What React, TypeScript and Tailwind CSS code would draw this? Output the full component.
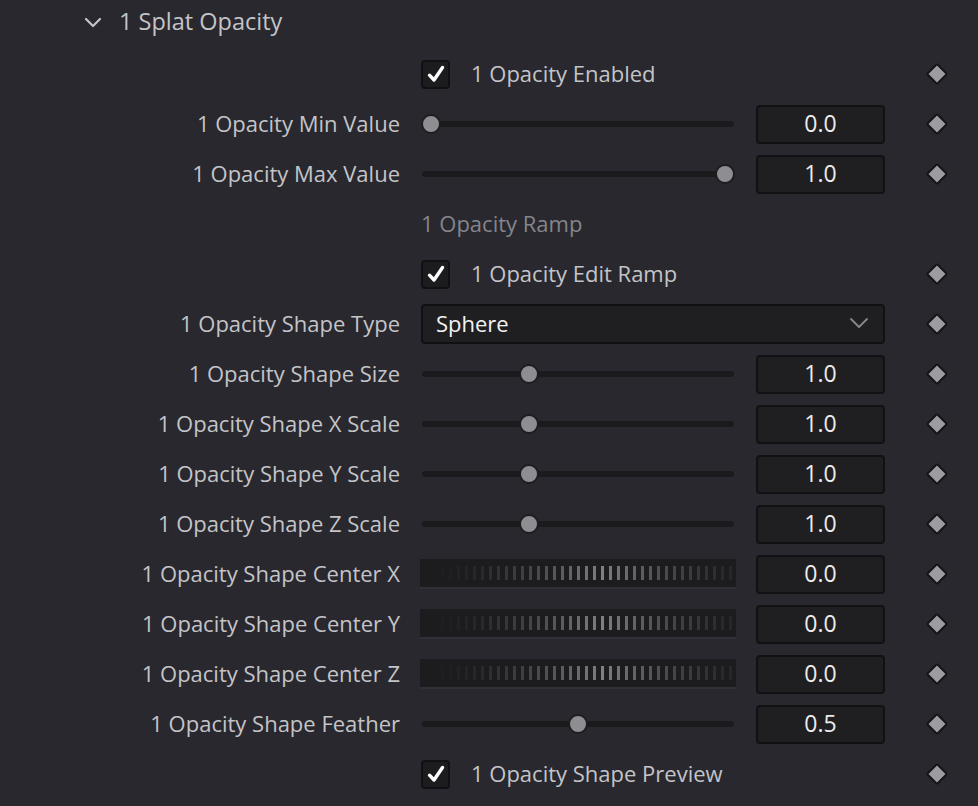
import type { ReactNode } from 'react';

const font = { fontFamily: '"Open Sans", "Noto Sans", sans-serif' };

function Diamond() {
  return (
    <div className="flex w-[93px] shrink-0 items-center pl-[44px]">
      <div className="h-[16px] w-[16px] rotate-45 rounded-[2px] border-2 border-[#151517] bg-[#9c9ca2]" />
    </div>
  );
}

function Label({ text }: { text: string }) {
  return <div className="w-[400px] shrink-0 whitespace-nowrap pb-[2px] text-right text-[#c4c4c8]">{text}</div>;
}

function Row({ label, children }: { label?: string; children: ReactNode }) {
  return (
    <div className="flex h-[50px] items-center">
      <Label text={label ?? ''} />
      <div className="ml-[21px] flex w-[464px] shrink-0 items-center">{children}</div>
      <Diamond />
    </div>
  );
}

function ValueBox({ value }: { value: string }) {
  return (
    <div className="ml-auto flex h-[39px] w-[129px] items-center justify-center rounded-[4px] border-2 border-[#111113] bg-[#1f1f21] pb-[2px] text-[23px] text-[#ececec]">
      {value}
    </div>
  );
}

function Slider({ pos, value }: { pos: number; value: string }) {
  // thumb travels from 10px to 304px inside the track area
  const left = 10 + pos * 294;
  return (
    <>
      <div className="relative h-[20px] w-[314px]">
        <div className="absolute left-[1px] right-[1px] top-[7px] h-[6px] rounded-full bg-[#1b1b1d]" />
        <div
          className="absolute top-0 h-[20px] w-[20px] -translate-x-1/2 rounded-full border-2 border-[#1e1e20] bg-[#8e8e92]"
          style={{ left }}
        />
      </div>
      <ValueBox value={value} />
    </>
  );
}

function Jog({ value }: { value: string }) {
  const ticks = Array.from({ length: 40 }, (_, i) => i);
  return (
    <>
      <div className="ml-[-1px] flex h-[30px] w-[316px] flex-col">
        <div className="flex h-[28px] items-center gap-[5px] overflow-hidden bg-[#1c1c1e] pl-[5px]">
          {ticks.map((i) => {
            const d = Math.min(1, Math.abs(i - 22) / 22);
            const t = Math.pow(1 - d, 1.7);
            const c = Math.round(28 + t * 100);
            return (
              <div
                key={i}
                className="h-[14px] w-[3px] shrink-0"
                style={{ background: `rgb(${c},${c},${c + 2})` }}
              />
            );
          })}
        </div>
        <div className="h-[2px] bg-[#303036]" />
      </div>
      <ValueBox value={value} />
    </>
  );
}

function Check({ label }: { label: string }) {
  return (
    <div className="flex items-center">
      <div className="flex h-[29px] w-[29px] items-center justify-center rounded-[4px] border-2 border-[#111113] bg-[#1c1c1e]">
        <svg width="20" height="20" viewBox="0 0 20 20">
          <path
            d="M3.5 11.2 L8 16 L16.5 3.5"
            fill="none"
            stroke="#ffffff"
            strokeWidth="3.4"
            strokeLinecap="round"
            strokeLinejoin="round"
          />
        </svg>
      </div>
      <span className="ml-[21px] whitespace-nowrap pb-[2px] text-[#c4c4c8]">{label}</span>
    </div>
  );
}

export default function App() {
  return (
    <div className="h-[806px] w-[978px] overflow-hidden bg-[#28282e] text-[22px]" style={font}>
      <div className="flex h-[49px] items-center pb-[5px] pl-[84px]">
        <svg width="18" height="12" viewBox="0 0 18 12">
          <path d="M2 3 L9 10 L16 3" fill="none" stroke="#c4c4c8" strokeWidth="2.2" strokeLinecap="round" strokeLinejoin="round" />
        </svg>
        <span className="ml-[17px] text-[23.5px] text-[#c4c4c8]">1 Splat Opacity</span>
      </div>

      <Row>
        <Check label="1 Opacity Enabled" />
      </Row>
      <Row label="1 Opacity Min Value">
        <Slider pos={0} value="0.0" />
      </Row>
      <Row label="1 Opacity Max Value">
        <Slider pos={1} value="1.0" />
      </Row>
      <div className="flex h-[50px] items-center">
        <div className="ml-[421px] pb-[2px] text-[#85858a]">1 Opacity Ramp</div>
      </div>
      <Row>
        <Check label="1 Opacity Edit Ramp" />
      </Row>
      <Row label="1 Opacity Shape Type">
        <div className="flex h-[40px] w-full items-center justify-between rounded-[4px] border-2 border-[#111113] bg-[#1f1f21] pb-[2px] pl-[13px] pr-[14px] text-[#f2f2f2]">
          <span>Sphere</span>
          <svg width="20" height="12" viewBox="0 0 20 12">
            <path d="M2 2 L10 10 L18 2" fill="none" stroke="#88888c" strokeWidth="1.8" strokeLinecap="round" strokeLinejoin="round" />
          </svg>
        </div>
      </Row>
      <Row label="1 Opacity Shape Size">
        <Slider pos={1 / 3} value="1.0" />
      </Row>
      <Row label="1 Opacity Shape X Scale">
        <Slider pos={1 / 3} value="1.0" />
      </Row>
      <Row label="1 Opacity Shape Y Scale">
        <Slider pos={1 / 3} value="1.0" />
      </Row>
      <Row label="1 Opacity Shape Z Scale">
        <Slider pos={1 / 3} value="1.0" />
      </Row>
      <Row label="1 Opacity Shape Center X">
        <Jog value="0.0" />
      </Row>
      <Row label="1 Opacity Shape Center Y">
        <Jog value="0.0" />
      </Row>
      <Row label="1 Opacity Shape Center Z">
        <Jog value="0.0" />
      </Row>
      <Row label="1 Opacity Shape Feather">
        <Slider pos={0.5} value="0.5" />
      </Row>
      <Row>
        <Check label="1 Opacity Shape Preview" />
      </Row>
    </div>
  );
}
